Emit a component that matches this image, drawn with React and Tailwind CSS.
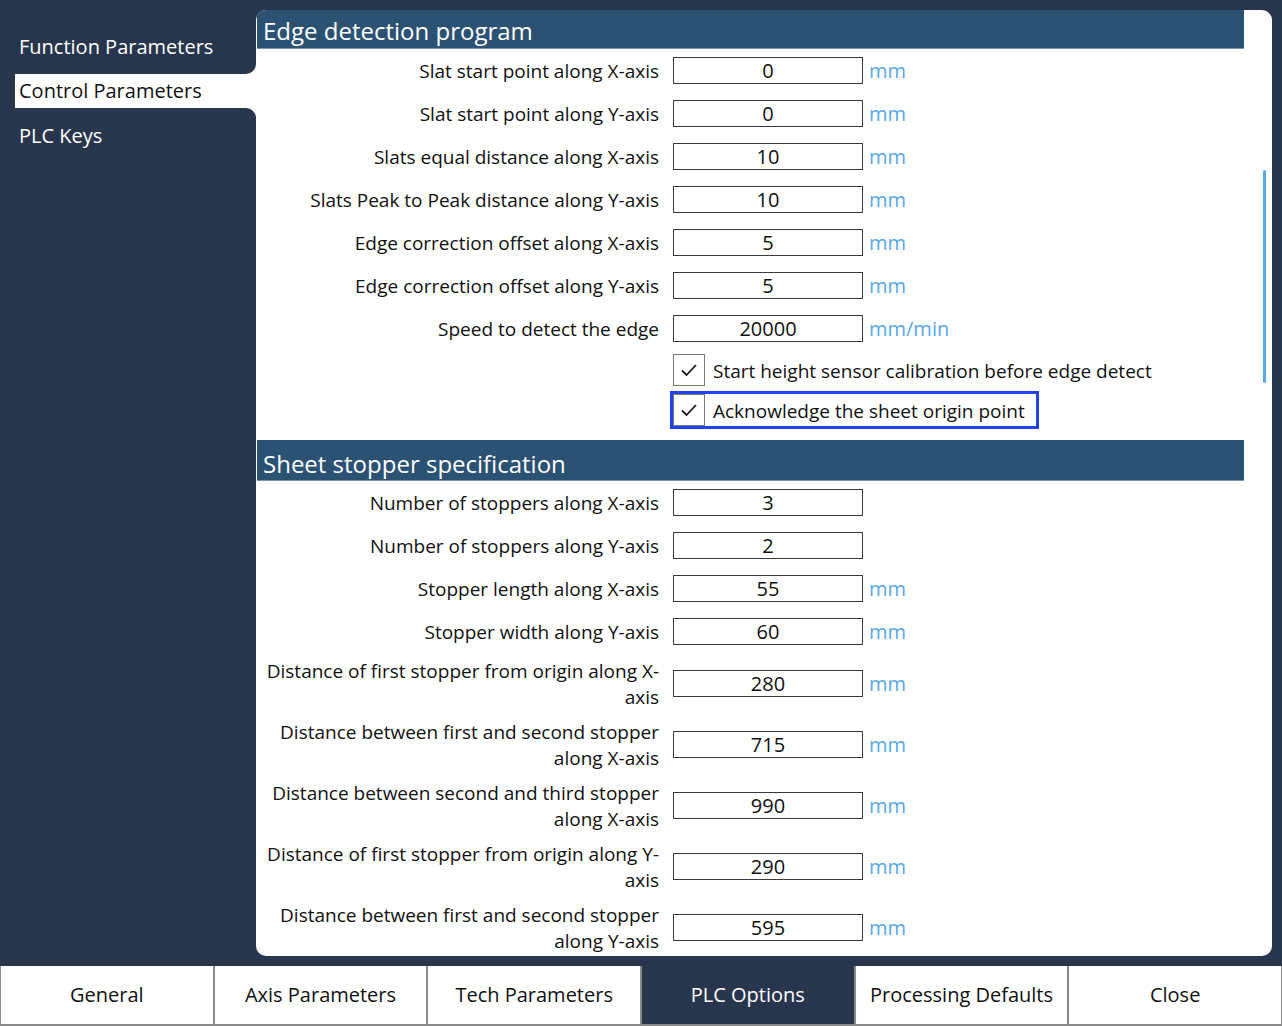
import React from "react";

const FONT = { fontFamily: '"Open Sans", "Noto Sans", sans-serif' };

function Check() {
  return (
    <div className="w-[32px] h-[32px] border border-[#7a7a7a] bg-white flex items-center justify-center shrink-0">
      <svg width="18" height="14" viewBox="0 0 18 14" fill="none">
        <path d="M2 7.5 L6.5 12 L16 2" stroke="#1a1a1a" strokeWidth="1.8" fill="none" />
      </svg>
    </div>
  );
}

function Row({ label, value, unit, lines }) {
  return (
    <div className={`flex items-center shrink-0 ${lines ? "h-[61px]" : "h-[43px]"}`}>
      <div className="w-[416px] text-right pr-[14px] text-[19px] leading-[26px] text-[#111] whitespace-nowrap">
        {lines ? (
          <>
            {lines[0]}
            <br />
            {lines[1]}
          </>
        ) : (
          label
        )}
      </div>
      <div className="w-[190px] h-[27px] border border-[#3a3a3a] flex items-center justify-center text-[20px] text-[#111] leading-none">
        {value}
      </div>
      {unit && <div className="ml-[6px] text-[20px] text-[#58a8ea]">{unit}</div>}
    </div>
  );
}

export default function App() {
  const sec1 = [
    ["Slat start point along X-axis", "0", "mm"],
    ["Slat start point along Y-axis", "0", "mm"],
    ["Slats equal distance along X-axis", "10", "mm"],
    ["Slats Peak to Peak distance along Y-axis", "10", "mm"],
    ["Edge correction offset along X-axis", "5", "mm"],
    ["Edge correction offset along Y-axis", "5", "mm"],
    ["Speed to detect the edge", "20000", "mm/min"],
  ];
  const sec2 = [
    ["Number of stoppers along X-axis", "3", null],
    ["Number of stoppers along Y-axis", "2", null],
    ["Stopper length along X-axis", "55", "mm"],
    ["Stopper width along Y-axis", "60", "mm"],
  ];
  const sec2b = [
    [["Distance of first stopper from origin along X-", "axis"], "280"],
    [["Distance between first and second stopper", "along X-axis"], "715"],
    [["Distance between second and third stopper", "along X-axis"], "990"],
    [["Distance of first stopper from origin along Y-", "axis"], "290"],
    [["Distance between first and second stopper", "along Y-axis"], "595"],
  ];
  const tabs = ["General", "Axis Parameters", "Tech Parameters", "PLC Options", "Processing Defaults", "Close"];

  return (
    <div className="w-[1282px] h-[1026px] bg-[#27364d] flex flex-col overflow-hidden" style={FONT}>
      <div className="flex h-[966px]">
        {/* Sidebar */}
        <div className="w-[256px] flex flex-col text-[20px]">
          <div className="bg-white">
            <div className="h-[74px] bg-[#27364d] rounded-br-[10px] flex items-end pb-[12px] pl-[19px] text-white">
              Function Parameters
            </div>
          </div>
          <div className="h-[34px] ml-[15px] bg-white flex items-center pl-[4px] text-[#111]">
            Control Parameters
          </div>
          <div className="bg-white flex-1 flex flex-col">
            <div className="flex-1 bg-[#27364d] rounded-tr-[10px] pl-[19px] pt-[13px] text-white">
              PLC Keys
            </div>
          </div>
        </div>

        {/* Main panel */}
        <div className="flex-1 pt-[10px] pb-[10px] pr-[10px]">
          <div className="h-full bg-white rounded-[10px] overflow-hidden flex">
            <div className="w-[988px] pl-[1px] flex flex-col">
              <div className="h-[39px] shrink-0 bg-[#2c5273] border-b border-[#7b93a8] flex items-center pt-[4px] pl-[6px] text-white text-[24px]">
                Edge detection program
              </div>
              {sec1.map(([l, v, u]) => (
                <Row key={l} label={l} value={v} unit={u} />
              ))}
              <div className="h-[40px] shrink-0 flex items-center pl-[416px]">
                <Check />
                <span className="ml-[8px] pt-[2px] text-[19px] text-[#111]">
                  Start height sensor calibration before edge detect
                </span>
              </div>
              <div className="h-[40px] shrink-0 flex items-center pl-[413px]">
                <div className="flex items-center border-[3px] border-[#2241f0] h-[38px] pr-[11px]">
                  <Check />
                  <span className="ml-[8px] pt-[2px] text-[19px] text-[#111]">Acknowledge the sheet origin point</span>
                </div>
              </div>
              <div className="h-[10px] shrink-0" />
              <div className="h-[41px] shrink-0 bg-[#2c5273] border-b border-[#7b93a8] flex items-center pt-[7px] pl-[6px] text-white text-[24px]">
                Sheet stopper specification
              </div>
              {sec2.map(([l, v, u]) => (
                <Row key={l} label={l} value={v} unit={u} />
              ))}
              {sec2b.map(([lines, v]) => (
                <Row key={v} lines={lines} value={v} unit="mm" />
              ))}
            </div>
            <div className="flex-1 relative">
              <div className="absolute left-[19px] top-[160px] w-[3px] h-[213px] rounded-full bg-[#58a8ea]" />
            </div>
          </div>
        </div>
      </div>

      {/* Bottom tabs */}
      <div className="h-[60px] grid grid-cols-6">
        {tabs.map((t) => (
          <div
            key={t}
            className={`flex items-center justify-center text-[20px] border-x border-b-2 border-[#8a8a8a] ${
              t === "PLC Options" ? "bg-[#27364d] text-white" : "bg-white text-[#111]"
            }`}
          >
            {t}
          </div>
        ))}
      </div>
    </div>
  );
}
